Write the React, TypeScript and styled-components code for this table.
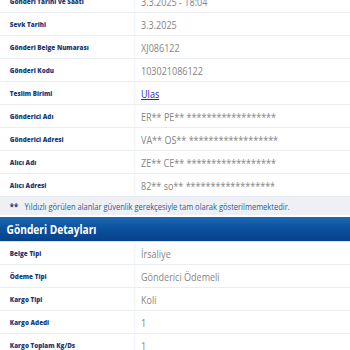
import React from 'react';
import styled, { createGlobalStyle } from 'styled-components';

const GlobalStyle = createGlobalStyle`
  html, body {
    margin: 0;
    padding: 0;
    background: #ffffff;
    font-family: "Open Sans", "Noto Sans", sans-serif;
    overflow: hidden;
  }
`;

interface Row {
  label: string;
  value: string;
  link?: boolean;
}

const senderRows: Row[] = [
  { label: 'Gönderi Tarihi ve Saati', value: '3.3.2025 - 18:04' },
  { label: 'Sevk Tarihi', value: '3.3.2025' },
  { label: 'Gönderi Belge Numarası', value: 'XJ086122' },
  { label: 'Gönderi Kodu', value: '103021086122' },
  { label: 'Teslim Birimi', value: 'Ulas', link: true },
  { label: 'Gönderici Adı', value: 'ER** PE** ******************' },
  { label: 'Gönderici Adresi', value: 'VA** OS** ******************' },
  { label: 'Alıcı Adı', value: 'ZE** CE** ******************' },
  { label: 'Alıcı Adresi', value: '82** so** ******************' },
];

const detailRows: Row[] = [
  { label: 'Belge Tipi', value: 'İrsaliye' },
  { label: 'Ödeme Tipi', value: 'Gönderici Ödemeli' },
  { label: 'Kargo Tipi', value: 'Koli' },
  { label: 'Kargo Adedi', value: '1' },
  { label: 'Kargo Toplam Kg/Ds', value: '1' },
];

// the captured page is narrower than it was laid out, so squeeze it horizontally
const Page = styled.div`
  margin-top: -10px;
  width: 427px;
  transform: scaleX(0.82);
  transform-origin: left top;
`;

const Table = styled.div`
  display: flex;
  flex-direction: column;
`;

const TableRow = styled.div`
  display: grid;
  grid-template-columns: 165px 1fr;
  height: 23px;
  border-bottom: 1px solid #e9edf2;
  box-sizing: border-box;
`;

const Label = styled.div`
  display: flex;
  align-items: center;
  padding-left: 12px;
  font-size: 7.7px;
  font-weight: 800;
  color: #1b3a78;
  border-right: 1px solid #e9edf2;
  white-space: nowrap;
`;

const Value = styled.div`
  display: flex;
  align-items: center;
  padding-left: 7px;
  font-size: 11px;
  color: #858585;
  white-space: nowrap;
`;

const ValueLink = styled.a`
  color: #2626c8;
  text-decoration: underline;
`;

const Note = styled.div`
  display: flex;
  align-items: center;
  gap: 8px;
  height: 18px;
  padding-left: 12px;
  background: #eef0f3;
  font-size: 9.2px;
  color: #2c5c9c;
  white-space: nowrap;
`;

const Stars = styled.span`
  font-weight: 700;
  color: #1d3c78;
`;

const SectionHeader = styled.div`
  height: 24px;
  display: flex;
  align-items: center;
  padding-left: 8px;
  margin-top: 2px;
  background: linear-gradient(to bottom, #1c69b4 0%, #0c52a0 45%, #06418a 100%);
  border-bottom: 1px solid #cfe0f2;
  color: #ffffff;
  font-size: 12.4px;
  font-weight: 700;
`;

const renderRows = (rows: Row[]) =>
  rows.map((r) => (
    <TableRow key={r.label}>
      <Label>{r.label}</Label>
      <Value>{r.link ? <ValueLink href="#">{r.value}</ValueLink> : r.value}</Value>
    </TableRow>
  ));

export default function App() {
  return (
    <Page>
      <GlobalStyle />
      <Table>{renderRows(senderRows)}</Table>
      <Note>
        <Stars>**</Stars>
        <span>Yıldızlı görülen alanlar güvenlik gerekçesiyle tam olarak gösterilmemektedir.</span>
      </Note>
      <SectionHeader>Gönderi Detayları</SectionHeader>
      <Table>{renderRows(detailRows)}</Table>
    </Page>
  );
}
